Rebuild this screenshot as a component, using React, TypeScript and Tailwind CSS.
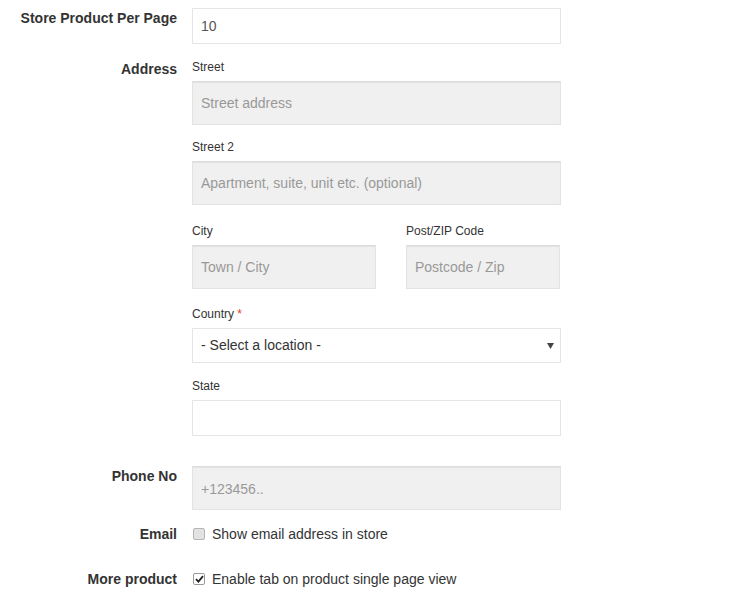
import React from "react";

const font = { fontFamily: '"Liberation Sans", Arial, sans-serif' };

function Label({ children }: { children: React.ReactNode }) {
  return (
    <div className="w-[177px] shrink-0 text-right text-[14px] font-bold leading-5 text-[#333]">
      {children}
    </div>
  );
}

function SubLabel({ children }: { children: React.ReactNode }) {
  return <div className="text-[12px] leading-4 text-[#333]">{children}</div>;
}

function GrayInput({ placeholder, className = "" }: { placeholder: string; className?: string }) {
  return (
    <div
      className={`flex h-[44px] items-center border border-[#e3e3e3] border-t-[#dcdcdc] bg-[#f0f0f0] pl-2 text-[14px] text-[#999] shadow-[inset_0_1px_1px_rgba(0,0,0,0.06)] ${className}`}
    >
      {placeholder}
    </div>
  );
}

export default function App() {
  return (
    <div style={font} className="min-h-[604px] w-[729px] bg-white pt-2 text-[#333]">
      {/* Store product per page */}
      <div className="flex gap-[15px]">
        <Label>Store Product Per Page</Label>
        <div className="flex h-[36px] w-[369px] items-center border border-[#e5e5e5] bg-white pl-2 text-[14px] text-[#555]">
          10
        </div>
      </div>

      {/* Address */}
      <div className="mt-[15px] flex gap-[15px]">
        <Label>Address</Label>
        <div className="flex w-[369px] flex-col">
          <SubLabel>Street</SubLabel>
          <GrayInput placeholder="Street address" className="mt-[6px]" />
          <div className="mt-[14px]">
            <SubLabel>Street 2</SubLabel>
          </div>
          <GrayInput placeholder="Apartment, suite, unit etc. (optional)" className="mt-[6px]" />
          <div className="mt-[18px] flex gap-[30px]">
            <div className="flex w-[184px] flex-col">
              <SubLabel>City</SubLabel>
              <GrayInput placeholder="Town / City" className="mt-[6px]" />
            </div>
            <div className="flex w-[154px] flex-col">
              <SubLabel>Post/ZIP Code</SubLabel>
              <GrayInput placeholder="Postcode / Zip" className="mt-[6px]" />
            </div>
          </div>
          <div className="mt-[17px]">
            <SubLabel>
              Country <span className="text-[#e2401c]">*</span>
            </SubLabel>
          </div>
          <div className="mt-[6px] flex h-[35px] items-center justify-between border border-[#e5e5e5] bg-white pl-2 pr-[6px] text-[14px] text-[#333]">
            <span>- Select a location -</span>
            <svg width="7" height="6" viewBox="0 0 7 6">
              <path d="M0 0H7L3.5 6Z" fill="#444" />
            </svg>
          </div>
          <div className="mt-[15px]">
            <SubLabel>State</SubLabel>
          </div>
          <div className="mt-[6px] h-[36px] border border-[#e5e5e5] bg-white" />
        </div>
      </div>

      {/* Phone */}
      <div className="mt-[30px] flex gap-[15px]">
        <Label>Phone No</Label>
        <GrayInput placeholder="+123456.." className="w-[369px] pt-[2px]" />
      </div>

      {/* Email */}
      <div className="mt-[14px] flex gap-[15px]">
        <Label>Email</Label>
        <div className="flex items-center text-[14px] leading-5 text-[#333]">
          <span className="ml-[1px] inline-block h-[12px] w-[12px] rounded-[2px] border border-[#b5b5b5] bg-[#e2e2e2]" />
          <span className="ml-[7px]">Show email address in store</span>
        </div>
      </div>

      {/* More product */}
      <div className="mt-[25px] flex gap-[15px]">
        <Label>More product</Label>
        <div className="flex items-center text-[14px] leading-5 text-[#333]">
          <span className="ml-[1px] flex h-[12px] w-[12px] items-center justify-center rounded-[2px] border border-[#9a9a9a] bg-white">
            <svg width="9" height="8" viewBox="0 0 9 8">
              <path d="M1 4.2L3.4 6.6L8 1.2" stroke="#222" strokeWidth="1.8" fill="none" />
            </svg>
          </span>
          <span className="ml-[7px]">Enable tab on product single page view</span>
        </div>
      </div>
    </div>
  );
}
